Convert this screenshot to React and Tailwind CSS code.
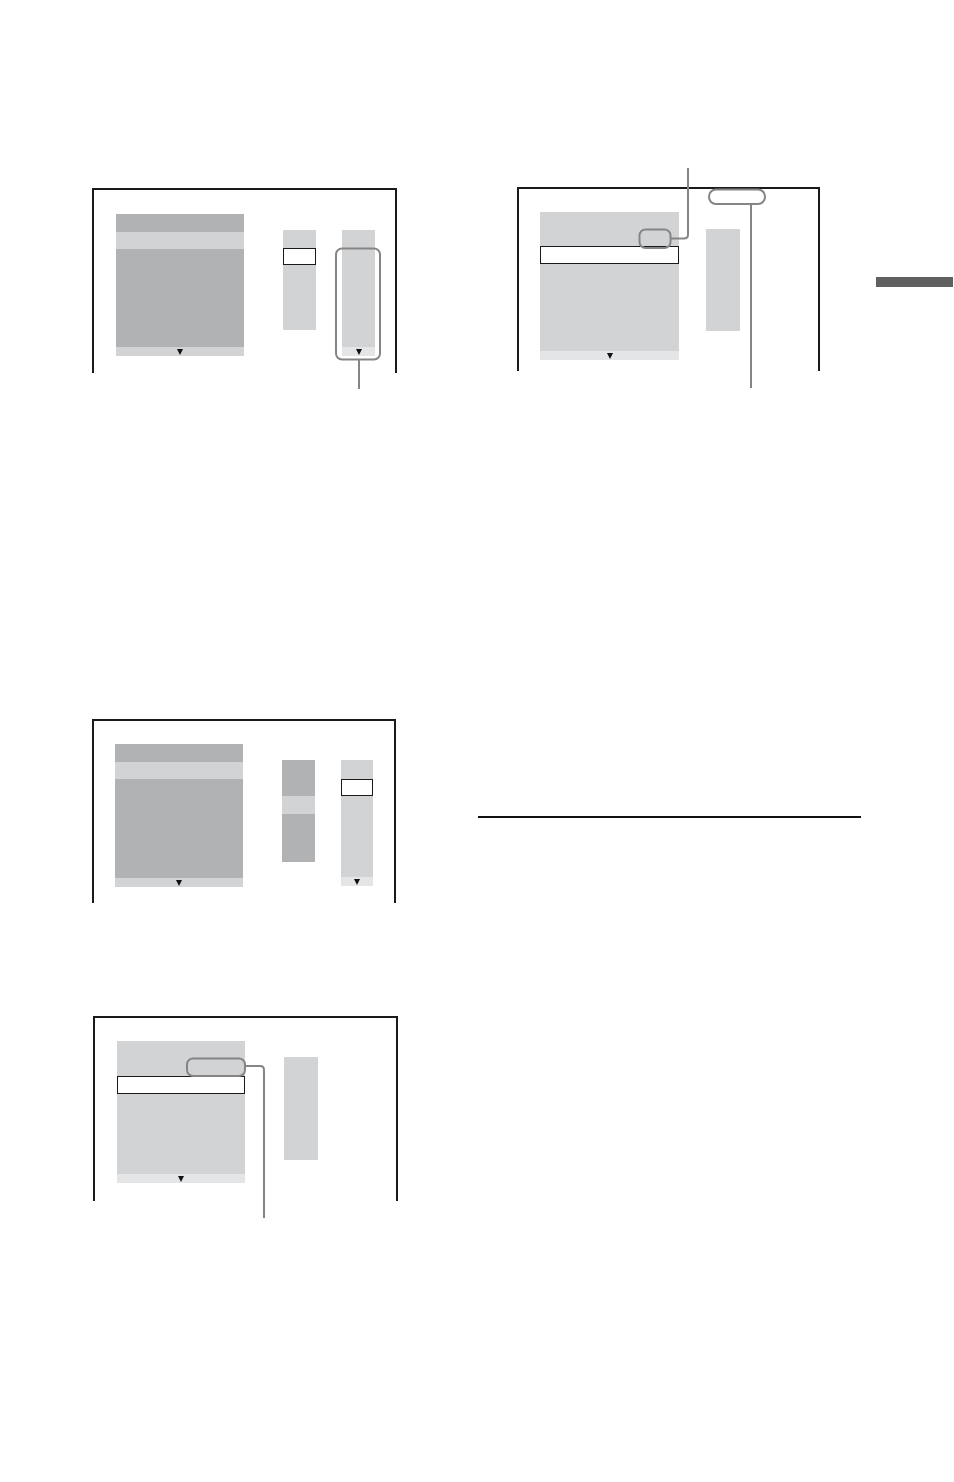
import React from 'react';

const DARK = 'bg-[#b1b2b4]';
const LIGHT = 'bg-[#d2d3d5]';
const BAR = 'bg-[#e4e5e6]';

function Arrow() {
  return (
    <div className="w-0 h-0 border-x-[3px] border-x-transparent border-t-[6px] border-t-[#111]" />
  );
}

function BottomBar({ className = BAR }) {
  return (
    <div className={`h-[9px] flex items-center justify-center ${className}`}>
      <Arrow />
    </div>
  );
}

function Frame({ className, children }) {
  return (
    <div className={`border-t-2 border-x-2 border-[#1a1a1a] ${className}`}>{children}</div>
  );
}

function Callouts() {
  return (
    <svg
      className="absolute inset-0 pointer-events-none"
      width="954"
      height="1482"
      viewBox="0 0 954 1482"
      fill="none"
      stroke="#858585"
      strokeWidth="2"
    >
      {/* figure 1 */}
      <rect x="336" y="248.5" width="44" height="111" rx="6" />
      <line x1="359" y1="360" x2="359" y2="389" />
      {/* figure 2 */}
      <rect x="639.5" y="229.5" width="31" height="18.5" rx="6" />
      <path d="M671 238.5 H684 Q688 238.5 688 234.5 V168" />
      <rect x="709" y="189.5" width="56" height="14.5" rx="7" />
      <line x1="751" y1="204" x2="751" y2="388" />
      {/* figure 4 */}
      <rect x="187" y="1058.5" width="58" height="17.5" rx="6" />
      <path d="M245 1066 H260 Q264 1066 264 1070 V1218" />
    </svg>
  );
}

export default function App() {
  return (
    <div className="relative w-[954px] h-[1482px] bg-white flex">
      {/* left column */}
      <div className="w-[478px] pl-[92px] flex flex-col">
        <Frame className="mt-[188px] w-[305px] h-[185px]">
          <div className="flex items-start pl-[22px] pt-[24px]">
            <div className="w-[128px] flex flex-col">
              <div className={`h-[18px] ${DARK}`} />
              <div className={`h-[17px] ${LIGHT}`} />
              <div className={`h-[98px] ${DARK}`} />
              <BottomBar className={LIGHT} />
            </div>
            <div className={`ml-[39px] mt-[16px] w-[33px] h-[100px] pt-[18px] ${LIGHT}`}>
              <div className="h-[17px] bg-white border border-[#1a1a1a]" />
            </div>
            <div className="ml-[26px] mt-[16px] w-[33px] flex flex-col">
              <div className={`h-[117px] ${LIGHT}`} />
              <BottomBar />
            </div>
          </div>
        </Frame>

        <Frame className="mt-[346px] w-[304px] h-[184px]">
          <div className="flex items-start pl-[21px] pt-[23px]">
            <div className="w-[128px] flex flex-col">
              <div className={`h-[18px] ${DARK}`} />
              <div className={`h-[17px] ${LIGHT}`} />
              <div className={`h-[99px] ${DARK}`} />
              <BottomBar className={LIGHT} />
            </div>
            <div className="ml-[39px] mt-[16px] w-[33px] flex flex-col">
              <div className={`h-[36px] ${DARK}`} />
              <div className={`h-[18px] ${LIGHT}`} />
              <div className={`h-[48px] ${DARK}`} />
            </div>
            <div className="ml-[26px] mt-[16px] w-[32px] flex flex-col">
              <div className={`h-[117px] pt-[19px] ${LIGHT}`}>
                <div className="h-[17px] bg-white border border-[#1a1a1a]" />
              </div>
              <BottomBar />
            </div>
          </div>
        </Frame>

        <Frame className="mt-[113px] ml-px w-[305px] h-[185px]">
          <div className="flex items-start pl-[22px] pt-[23px]">
            <div className="w-[128px] flex flex-col">
              <div className={`h-[133px] pt-[35px] ${LIGHT}`}>
                <div className="h-[18px] bg-white border border-[#1a1a1a]" />
              </div>
              <BottomBar />
            </div>
            <div className={`ml-[39px] mt-[16px] w-[34px] h-[103px] ${LIGHT}`} />
          </div>
        </Frame>
      </div>

      {/* middle column */}
      <div className="w-[398px] flex flex-col">
        <Frame className="mt-[187px] ml-[39px] w-[303px] h-[184px]">
          <div className="flex items-start pl-[21px] pt-[23px]">
            <div className="w-[139px] flex flex-col">
              <div className={`h-[139px] pt-[34px] ${LIGHT}`}>
                <div className="h-[18px] bg-white border border-[#1a1a1a]" />
              </div>
              <BottomBar className="h-[8px] bg-[#e4e5e6]" />
            </div>
            <div className={`ml-[27px] mt-[17px] w-[34px] h-[102px] ${LIGHT}`} />
          </div>
        </Frame>
        <div className="mt-[445px] w-[383px] h-[1.5px] bg-[#111]" />
      </div>

      {/* side tab */}
      <div className="flex-1 pr-px">
        <div className="mt-[277px] h-[10px] bg-[#606060]" />
      </div>

      <Callouts />
    </div>
  );
}
